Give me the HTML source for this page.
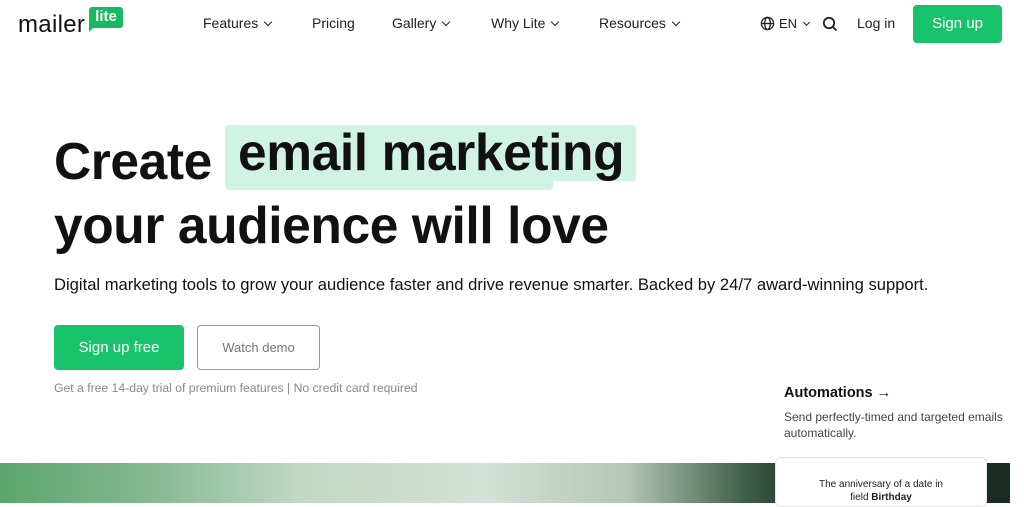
<!DOCTYPE html>
<html><head><meta charset="utf-8"><style>
*{margin:0;padding:0;box-sizing:border-box}
body{width:1024px;height:503px;overflow:hidden;background:#fff;font-family:"Liberation Sans",sans-serif;color:#111;position:relative}
.a{position:absolute;white-space:nowrap}
.nav{font-size:14px;color:#222;top:15px}
.chev{display:inline-block;width:6px;height:6px;border-right:1.6px solid #222;border-bottom:1.6px solid #222;transform:rotate(45deg);margin-left:7px;position:relative;top:-3px}
h1{font-size:51.5px;font-weight:bold;letter-spacing:-0.4px}
</style></head><body>
<div class="a" style="left:18px;top:11px;font-size:24px;color:#111;letter-spacing:0.3px">mailer</div>
<div class="a" style="left:89px;top:7px;width:34px;height:21px;background:#19b862;border-radius:3px;color:#fff;font-size:15px;text-align:center;line-height:19px;font-weight:bold">lite</div>
<div class="a" style="left:89px;top:26px;width:0;height:0;border-left:6px solid #19b862;border-bottom:6px solid transparent"></div>
<div class="a nav" style="left:203px">Features<span class="chev"></span></div>
<div class="a nav" style="left:312px">Pricing</div>
<div class="a nav" style="left:392px">Gallery<span class="chev"></span></div>
<div class="a nav" style="left:491px">Why Lite<span class="chev"></span></div>
<div class="a nav" style="left:599px">Resources<span class="chev"></span></div>
<svg class="a" style="left:760px;top:16px" width="15" height="15" viewBox="0 0 16 16" fill="none" stroke="#222" stroke-width="1.4"><circle cx="8" cy="8" r="6.5"/><ellipse cx="8" cy="8" rx="3" ry="6.5"/><path d="M1.5 8h13"/></svg>
<div class="a nav" style="left:779px;top:16px;font-size:13px">EN<span class="chev" style="width:5px;height:5px"></span></div>
<svg class="a" style="left:822px;top:16px" width="16" height="16" viewBox="0 0 16 16" fill="none" stroke="#222" stroke-width="1.8"><circle cx="7" cy="7" r="5.2"/><path d="M11 11l3.5 3.5"/></svg>
<div class="a nav" style="left:857px">Log in</div>
<div class="a" style="left:913px;top:5px;width:89px;height:38px;background:#19c36b;border-radius:4px;color:#fff;font-size:15px;text-align:center;line-height:38px">Sign up</div>

<div class="a" style="left:225px;top:125px;width:411px;height:56px;background:#d0f3e4;border-radius:3px"></div>
<div class="a" style="left:225px;top:178px;width:328px;height:12px;background:#d0f3e4;border-radius:0 0 4px 4px"></div>
<h1 class="a" style="left:54px;top:131px">Create</h1>
<h1 class="a" style="left:238px;top:122px">email marketing</h1>
<h1 class="a" style="left:54px;top:195px">your audience will love</h1>
<div class="a" style="left:54px;top:275px;font-size:16.6px;color:#111">Digital marketing tools to grow your audience faster and drive revenue smarter. Backed by 24/7 award-winning support.</div>
<div class="a" style="left:54px;top:325px;width:130px;height:45px;background:#19c36b;border-radius:4px;color:#fff;font-size:15px;text-align:center;line-height:45px">Sign up free</div>
<div class="a" style="left:197px;top:325px;width:123px;height:45px;border:1px solid #999;border-radius:4px;color:#777;font-size:13px;text-align:center;line-height:43px">Watch demo</div>
<div class="a" style="left:54px;top:381px;font-size:12.2px;color:#888">Get a free 14-day trial of premium features | No credit card required</div>
<div class="a" style="left:784px;top:385px;font-size:14.5px;font-weight:bold;color:#111">Automations →</div>
<div class="a" style="left:784px;top:409px;font-size:12px;color:#444;line-height:16px;white-space:normal;width:230px">Send perfectly-timed and targeted emails automatically.</div>
<div class="a" style="left:0;top:463px;width:1010px;height:40px;background:linear-gradient(90deg,#5ba56d 0%,#86b992 15%,#c2d8c5 30%,#d3e1d6 48%,#b4c7b8 62%,#3d5d48 74%,#1c2f27 80%,#1b2c25 100%)"></div>
<div class="a" style="left:775px;top:457px;width:212px;height:50px;background:#fff;border:1px solid #e4e4e4;border-radius:6px;text-align:center;font-size:10px;color:#222;padding-top:20px;line-height:13px">The anniversary of a date in<br>field <b>Birthday</b></div>
<div class="a" style="left:1015px;top:460px;width:12px;height:45px;background:#fff;border-radius:4px"></div>
</body></html>
